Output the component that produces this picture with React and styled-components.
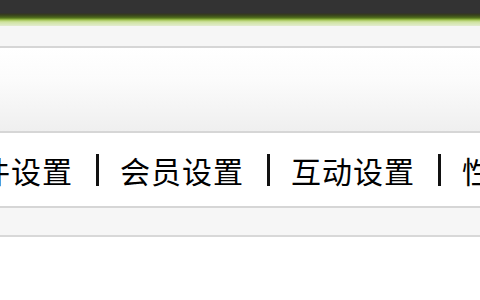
import React from "react";
import styled, { createGlobalStyle } from "styled-components";

const Global = createGlobalStyle`
  html, body { margin: 0; padding: 0; background: #fff; }
  body { width: 480px; height: 300px; overflow: hidden; font-family: "Noto Sans CJK SC", "Noto Sans", sans-serif; }
`;

const Page = styled.div`
  display: flex;
  flex-direction: column;
  width: 480px;
  height: 300px;
  overflow: hidden;
  background: #fff;
`;

const TopBar = styled.div`
  height: 26px;
  flex: none;
  background: linear-gradient(
    to bottom,
    #333333 0px,
    #333333 13px,
    #34381f 14px,
    #3e4f1c 16px,
    #54731f 18px,
    #7fa332 19px,
    #a3c458 20px,
    #bdd67f 21px,
    #cfe2a0 22px,
    #d9e8b8 24px,
    #e3ecd0 26px
  );
`;

const SubBar = styled.div`
  height: 20px;
  flex: none;
  background: #f6f6f6;
  border-bottom: 2px solid #d6d6d6;
`;

const Banner = styled.div`
  height: 83px;
  flex: none;
  background: linear-gradient(to bottom, #ffffff 0%, #fbfbfb 40%, #efefef 100%);
  border-bottom: 2px solid #d6d6d6;
`;

const Nav = styled.nav`
  height: 73px;
  flex: none;
  background: #fff;
  border-bottom: 2px solid #d6d6d6;
  display: flex;
  align-items: center;
  overflow: hidden;
`;

const NavList = styled.div`
  display: flex;
  align-items: center;
  flex: none;
  margin-left: -51px;
  white-space: nowrap;
`;

const NavItem = styled.span`
  font-family: "Noto Sans CJK SC", "Noto Sans", sans-serif;
  font-size: 30px;
  line-height: 34px;
  letter-spacing: 1px;
  color: #000;
`;

const Sep = styled.span`
  display: block;
  width: 3px;
  height: 32px;
  background: #111;
  margin: 0 21px 0 23px;
  flex: none;
`;

const Strip = styled.div`
  height: 27px;
  flex: none;
  background: #f6f6f6;
  border-bottom: 2px solid #d8d8d8;
`;

const Rest = styled.div`
  flex: 1;
  background: #fff;
`;

const items = ["插件设置", "会员设置", "互动设置", "性能设置", "系统设置"];

export default function App() {
  return (
    <Page>
      <Global />
      <TopBar />
      <SubBar />
      <Banner />
      <Nav>
        <NavList>
          {items.map((t, i) => (
            <React.Fragment key={t}>
              {i > 0 && <Sep />}
              <NavItem>{t}</NavItem>
            </React.Fragment>
          ))}
        </NavList>
      </Nav>
      <Strip />
      <Rest />
    </Page>
  );
}
